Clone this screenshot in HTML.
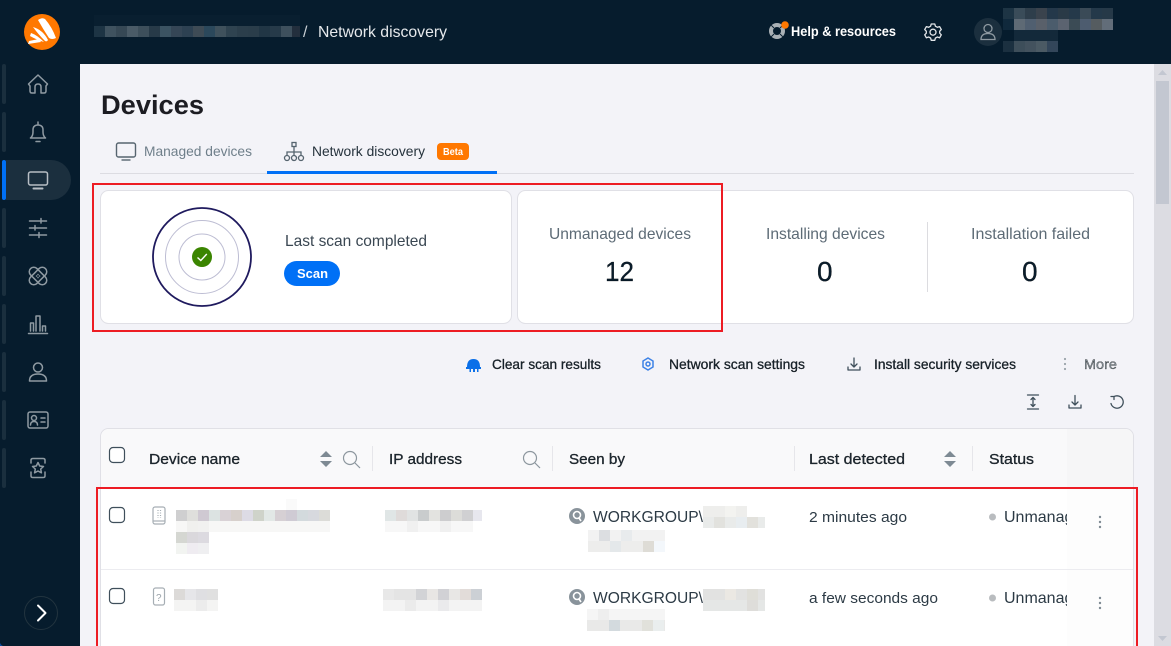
<!DOCTYPE html>
<html><head><meta charset="utf-8"><title>Network discovery</title>
<style>
html,body{margin:0;padding:0;width:1171px;height:646px;overflow:hidden;background:#f3f3f8}
svg{display:block}
text{font-family:"Liberation Sans",sans-serif}
.m{stroke:currentColor;stroke-width:.25px}
rect.p{width:11px;height:11px;shape-rendering:crispEdges}
.si{fill:none;stroke:#8f9aa2;stroke-width:1.500;stroke-linecap:round;stroke-linejoin:round}
.ai{fill:none;stroke:#3f4f5b;stroke-width:1.300;stroke-linecap:round;stroke-linejoin:round}
</style></head><body>
<svg width="1171" height="646" viewBox="0 0 1171 646" xmlns="http://www.w3.org/2000/svg">
<defs><clipPath id="c"><rect x="980" y="490" width="87" height="156"/></clipPath></defs>
<rect width="1171" height="646" fill="#f3f3f8"/>
<rect width="1171" height="64" fill="#061c2d"/>
<rect width="80" height="646" fill="#061c2d"/>
<path d="M0 643 Q1 645 3 646 H0Z" fill="#0a4a9a"/>

<!-- logo -->
<circle cx="42" cy="32" r="18" fill="#ff7800"/>
<path d="M38 20 Q42 17 45 19 Q52 27 56 38 Q52 40 49 38 Q43 29 38 20Z M33 27 Q43 30 48 40 Q47 42 45 41 Q38 34 33 27Z M31 33 Q37 35 44 42 Q37 40 30 36Z M29 41 L39 39 L41 42 L28 44Z" fill="#fff"/>

<!-- sidebar ticks -->
<g fill="#1a2f3e">
<rect x="2" y="64" width="4" height="40" rx="2"/><rect x="2" y="112" width="4" height="40" rx="2"/>
<rect x="2" y="208" width="4" height="40" rx="2"/><rect x="2" y="256" width="4" height="40" rx="2"/>
<rect x="2" y="304" width="4" height="40" rx="2"/><rect x="2" y="352" width="4" height="40" rx="2"/>
<rect x="2" y="400" width="4" height="40" rx="2"/><rect x="2" y="448" width="4" height="40" rx="2"/>
</g>
<path d="M6 160 H51 A20 20 0 0 1 51 200 H6Z" fill="#1b2f3e"/>
<rect x="2" y="160" width="4" height="40" rx="2" fill="#0070f6"/>

<!-- sidebar icons -->
<g class="si">
<path transform="translate(38,84)" d="M-9.500 0 L0 -9 L9.500 0 L8 2 V7 Q8 9 6 9 H3 V3 Q3 0 0 0 Q-3 0 -3 3 V9 H-6 Q-8 9 -8 7 V2Z"/>
<path transform="translate(38,132)" d="M-7.500 6 H7.500 Q5 4 5 0 V-2 Q5 -7 0 -7 Q-5 -7 -5 -2 V0 Q-5 4 -7.500 6Z M0 -7 V-10 M-2 9.500 H2"/>
<g transform="translate(38,180)" style="stroke:#b7bec4"><rect x="-9.500" y="-8" width="19" height="13" rx="2"/><path d="M-4.500 8.500 H4.500" stroke-width="2"/></g>
<path transform="translate(38,228)" d="M-8.500 -7 H8.500 M3 -9.500 V-5 M-8.500 0 H8.500 M-3 -2.500 V2 M-8.500 7 H8.500 M1 4.500 V9.500"/>
<g transform="translate(38,276)"><rect x="-10.500" y="-4.500" width="21" height="9" rx="4.500" transform="rotate(45)"/><rect x="-10.500" y="-4.500" width="21" height="9" rx="4.500" transform="rotate(-45)"/><path d="M0 -1.500 V-1.400 M0 1.500 V1.600 M-1.500 0 H-1.400 M1.500 0 H1.600"/></g>
<g transform="translate(38,324)"><path d="M-9.500 9.500 H9.500 M-7.500 7 V-1 H-4.500 V7 M-2 7 V-8 H2 V7 M4.500 7 V2 H7.500 V7"/></g>
<g transform="translate(38,372)"><circle cx="0" cy="-4.500" r="4.500"/><path d="M-8.500 9 Q-8.500 2 0 2 Q8.500 2 8.500 9Z"/></g>
<g transform="translate(38,420)"><rect x="-10" y="-8" width="20" height="16" rx="2"/><circle cx="-4" cy="-2" r="2.500"/><path d="M-7.500 5 Q-7.500 1.500 -4 1.500 Q-.5 1.500 -.5 5 M3 -2 H7 M3 2 H7"/></g>
<g transform="translate(38,468)"><path d="M-7 -5 V-8 Q-7 -9.500 -5 -9.500 H5 Q7 -9.500 7 -8 V-5 M-7 4 V8 Q-7 9.500 -5 9.500 H5 Q7 9.500 7 8 V4 M0 -5.500 L1.700 -2 L5.500 -1.500 L2.700 1 L3.400 4.800 L0 3 L-3.400 4.800 L-2.700 1 L-5.500 -1.500 L-1.700 -2Z"/></g>
</g>
<circle cx="41" cy="613" r="16.500" fill="none" stroke="#22343f" stroke-width="1"/>
<path d="M38 605.500 L45.500 613 L38 620.500" fill="none" stroke="#fff" stroke-width="2" stroke-linecap="round" stroke-linejoin="round"/>

<!-- header blur -->
<g>
<rect x="94" y="15" width="206" height="11" fill="#091f30"/>
<rect class="p" x="94" y="26" fill="#1d3444"/><rect class="p" x="105" y="26" fill="#3f525f"/><rect class="p" x="116" y="26" fill="#364855"/><rect class="p" x="127" y="26" fill="#4a5b67"/><rect class="p" x="138" y="26" fill="#3d4f5b"/><rect class="p" x="149" y="26" fill="#273a48"/><rect class="p" x="160" y="26" fill="#3b5362"/><rect class="p" x="171" y="26" fill="#354656"/><rect class="p" x="182" y="26" fill="#2d4152"/><rect class="p" x="193" y="26" fill="#3e4b55"/><rect class="p" x="204" y="26" fill="#2b485b"/><rect class="p" x="215" y="26" fill="#3f515c"/><rect class="p" x="226" y="26" fill="#2f4350"/><rect class="p" x="237" y="26" fill="#2b3e4b"/><rect class="p" x="248" y="26" fill="#2a3d4a"/><rect class="p" x="259" y="26" fill="#213645"/><rect class="p" x="270" y="26" fill="#263a49"/><rect class="p" x="281" y="26" fill="#3e505d"/><rect class="p" x="292" y="26" fill="#232f3d" style="width:8px"/>
</g>
<text x="303" y="37" font-size="16" fill="#c8cfd4">/</text>
<text x="318" y="37" font-size="16" fill="#e6e9ec" textLength="129" lengthAdjust="spacingAndGlyphs">Network discovery</text>

<!-- help -->
<circle cx="777" cy="31" r="6" fill="none" stroke="#aab1b6" stroke-width="4"/>
<path d="M771.300 25.300 L774 28 M782.700 25.300 L780 28 M771.300 36.700 L774 34 M782.700 36.700 L780 34" stroke="#061c2d" stroke-width="1"/>
<circle cx="785" cy="25" r="3.800" fill="#ff7800"/>
<text x="791" y="36" font-size="13.500" font-weight="700" fill="#fff" textLength="105" lengthAdjust="spacingAndGlyphs">Help &amp; resources</text>
<g transform="translate(933,32)" fill="none" stroke="#e3e6e9" stroke-width="1.300" stroke-linejoin="round">
<path d="M-1.800 -8 H1.800 L2.400 -5.800 L4.400 -4.700 L6.600 -5.400 L8.300 -2.400 L6.700 -.8 V1.200 L8.300 2.800 L6.600 5.800 L4.400 5 L2.400 6.100 L1.800 8.300 H-1.800 L-2.400 6.100 L-4.400 5 L-6.600 5.800 L-8.300 2.800 L-6.700 1.200 V-.8 L-8.300 -2.400 L-6.600 -5.400 L-4.400 -4.700 L-2.400 -5.800Z"/>
<circle cx="0" cy="0.200" r="3"/>
</g>
<circle cx="988" cy="32" r="14" fill="#1b2f3e"/>
<g transform="translate(988,32)" fill="none" stroke="#8f9aa2" stroke-width="1.300"><circle cx="0" cy="-3.500" r="4"/><path d="M-7 7.500 Q-7 1.500 0 1.500 Q7 1.500 7 7.500Z"/></g>
<g>
<rect class="p" x="1003" y="8" fill="#1d3444"/><rect class="p" x="1014" y="8" fill="#3a4c59"/><rect class="p" x="1025" y="8" fill="#2e3e4b"/><rect class="p" x="1036" y="8" fill="#3a434d"/><rect class="p" x="1047" y="8" fill="#24384a"/><rect class="p" x="1058" y="8" fill="#2a3a47"/><rect class="p" x="1069" y="8" fill="#25394a"/><rect class="p" x="1080" y="8" fill="#3a4a57"/><rect class="p" x="1091" y="8" fill="#24394a"/><rect class="p" x="1102" y="8" fill="#263948"/>
<rect class="p" x="1003" y="19" fill="#10293c"/><rect class="p" x="1014" y="19" fill="#5e6a75"/><rect class="p" x="1025" y="19" fill="#505f70"/><rect class="p" x="1036" y="19" fill="#59606a"/><rect class="p" x="1047" y="19" fill="#4b5c6c"/><rect class="p" x="1058" y="19" fill="#5b6370"/><rect class="p" x="1069" y="19" fill="#3b4b55"/><rect class="p" x="1080" y="19" fill="#4d5c6f"/><rect class="p" x="1091" y="19" fill="#555c60"/><rect class="p" x="1102" y="19" fill="#626d79"/>
<rect x="1014" y="30" width="44" height="11" fill="#13293a"/>
<rect class="p" x="1003" y="41" fill="#1b3040"/><rect class="p" x="1014" y="41" fill="#3d4e5a"/><rect class="p" x="1025" y="41" fill="#43525e"/><rect class="p" x="1036" y="41" fill="#4b5a64"/><rect class="p" x="1047" y="41" fill="#33465a"/>
</g>

<!-- scrollbar -->
<rect x="1154" y="64" width="17" height="582" fill="#dcdce2"/>
<rect x="1156" y="81" width="13" height="123" fill="#c3c7d1"/>
<path d="M1158 75 L1162.500 70 L1167 75Z" fill="#c3c7d1"/>
<path d="M1158 636 L1162.500 641 L1167 636Z" fill="#c3c7d1"/>

<!-- title -->
<text x="101" y="114" font-size="27" font-weight="700" fill="#1c1c22" textLength="103" lengthAdjust="spacingAndGlyphs">Devices</text>

<!-- tabs -->
<rect x="100" y="173" width="1034" height="1" fill="#dcdce2"/>
<rect x="267" y="171" width="230" height="3" fill="#0070f6"/>
<g transform="translate(126,151)" fill="none" stroke="#56646f" stroke-width="1.400"><rect x="-9.500" y="-8" width="19" height="14" rx="2"/><path d="M-4.500 9 H4.500"/></g>
<text x="144" y="156" font-size="14" fill="#6f7f8a" textLength="108" lengthAdjust="spacingAndGlyphs">Managed devices</text>
<g transform="translate(294,152)" fill="none" stroke="#56646f" stroke-width="1.300"><rect x="-2" y="-9.500" width="4" height="4"/><path d="M0 -5.500 V0 M-7 3 V0 H7 V3 M0 0 V3"/><circle cx="-7" cy="6" r="2.500"/><circle cx="0" cy="6" r="2.500"/><circle cx="7" cy="6" r="2.500"/></g>
<text x="312" y="156" font-size="14" fill="#25323c" textLength="113" lengthAdjust="spacingAndGlyphs">Network discovery</text>
<rect x="437" y="143" width="32" height="17" rx="4" fill="#ff7800"/>
<text x="443" y="155" font-size="10" font-weight="700" fill="#fff" textLength="20" lengthAdjust="spacingAndGlyphs">Beta</text>

<!-- cards -->
<rect x="100.500" y="190.500" width="411" height="133" rx="8" fill="#fff" stroke="#e0e0e6"/>
<rect x="517.500" y="190.500" width="616" height="133" rx="8" fill="#fff" stroke="#e0e0e6"/>
<g fill="none">
<circle cx="202" cy="257" r="49" stroke="#1f1a5e" stroke-width="1.800"/>
<circle cx="202" cy="257" r="36.500" stroke="#bdbdd3"/>
<circle cx="202" cy="257" r="23" stroke="#bdbdd3"/>
</g>
<circle cx="202" cy="257" r="10" fill="#3b8500"/>
<path d="M197.500 257.500 L200.800 260.500 L206.800 254" fill="none" stroke="#fff" stroke-width="1.400"/>
<text x="285" y="246" font-size="16" fill="#3a4752" textLength="142" lengthAdjust="spacingAndGlyphs">Last scan completed</text>
<rect x="284" y="261" width="56" height="25" rx="12.500" fill="#0070f6"/>
<text x="297" y="278" font-size="13" font-weight="700" fill="#fff" textLength="31" lengthAdjust="spacingAndGlyphs">Scan</text>
<text x="549" y="239" font-size="16" fill="#5d6b76" textLength="142" lengthAdjust="spacingAndGlyphs">Unmanaged devices</text>
<text x="605" y="281" font-size="28" fill="#0a1d2c" class="m" textLength="29" lengthAdjust="spacingAndGlyphs">12</text>
<text x="766" y="239" font-size="16" fill="#5d6b76" textLength="119" lengthAdjust="spacingAndGlyphs">Installing devices</text>
<text x="817" y="281" font-size="28" fill="#0a1d2c" class="m">0</text>
<rect x="927" y="222" width="1" height="70" fill="#dcdce0"/>
<text x="971" y="239" font-size="16" fill="#5d6b76" textLength="119" lengthAdjust="spacingAndGlyphs">Installation failed</text>
<text x="1022" y="281" font-size="28" fill="#0a1d2c" class="m">0</text>

<!-- red boxes -->
<rect x="93" y="184" width="629" height="147" fill="none" stroke="#ed1c24" stroke-width="2"/>

<!-- actions -->
<path d="M467 367 Q467 359 473.500 359 Q480 359 480 367 H481 V369 H478.500 V372 H477 V369 H475 V372 H473 V369 H471 V372 H469.500 V369 H466 V367Z" fill="#0a6fe8"/>
<text x="492" y="369" font-size="14" fill="#182631" class="m" textLength="109" lengthAdjust="spacingAndGlyphs">Clear scan results</text>
<g transform="translate(648,364)" fill="none" stroke="#3d82e6" stroke-width="1.500"><path d="M0 -6 L5 -3 V3 L0 6 L-5 3 V-3Z"/><circle r="2"/></g>
<text x="669" y="369" font-size="14" fill="#182631" class="m" textLength="136" lengthAdjust="spacingAndGlyphs">Network scan settings</text>
<g class="ai" transform="translate(854,364)"><path d="M0 -6 V2.500 M-3 0 L0 3 L3 0 M-6 3 V6 H6 V3"/></g>
<text x="874" y="369" font-size="14" fill="#182631" class="m" textLength="142" lengthAdjust="spacingAndGlyphs">Install security services</text>
<g fill="#9aa3aa"><circle cx="1065" cy="359" r="1.100"/><circle cx="1065" cy="364" r="1.100"/><circle cx="1065" cy="369" r="1.100"/></g>
<text x="1084" y="369" font-size="14" fill="#8b969e" class="m" textLength="33" lengthAdjust="spacingAndGlyphs">More</text>

<g class="ai" transform="translate(1033,402)"><path d="M-5.500 -7 H5.500 M-5.500 7 H5.500 M0 -4 V4 M-2 -2.500 L0 -4.500 L2 -2.500 M-2 2.500 L0 4.500 L2 2.500"/></g>
<g class="ai" transform="translate(1075,402)"><path d="M0 -6.500 V2.500 M-3 0 L0 3 L3 0 M-6 3 V6 H6 V3"/></g>
<g class="ai" transform="translate(1117,402)"><path d="M-3 -5.400 A6.200 6.200 0 1 1 -6 1.500 M-6 -5.500 H-3 V-2.500"/></g>

<!-- table -->
<path d="M108.500 428.500 H1125.500 A8 8 0 0 1 1133.500 436.500 V660 H100.500 V436.500 A8 8 0 0 1 108.500 428.500Z" fill="#fff" stroke="#e0e0e6"/>
<path d="M109 429 H1125 A8 8 0 0 1 1133 437 V487 H101 V437 A8 8 0 0 1 109 429Z" fill="#f9f9fa"/>
<!-- sticky col -->
<path d="M1067 429 H1125 A8 8 0 0 1 1133 437 V487 H1067Z" fill="#f6f6f7"/>
<rect x="1067" y="488" width="66" height="158" fill="#fdfdfd"/>
<rect x="101" y="569" width="1032" height="1" fill="#ececf0"/>
<g fill="#e6e6ea"><rect x="372" y="446" width="1" height="25"/><rect x="552" y="446" width="1" height="25"/><rect x="794" y="446" width="1" height="25"/><rect x="972" y="446" width="1" height="25"/></g>

<rect x="109.500" y="447.500" width="15" height="15" rx="3.500" fill="#fff" stroke="#3f4f5b" stroke-width="1.200"/>
<rect x="109.500" y="507.500" width="15" height="15" rx="3.500" fill="#fff" stroke="#3f4f5b" stroke-width="1.200"/>
<rect x="109.500" y="588.500" width="15" height="15" rx="3.500" fill="#fff" stroke="#3f4f5b" stroke-width="1.200"/>

<text x="149" y="464" font-size="15" fill="#1e2b35" class="m" textLength="91" lengthAdjust="spacingAndGlyphs">Device name</text>
<path d="M320 457 L326 451 L332 457Z M320 461 L326 467 L332 461Z" fill="#7e8a93"/>
<g fill="none" stroke="#8d979e" stroke-width="1.200"><circle cx="350" cy="458" r="6.500"/><path d="M355 463 L360 468"/><circle cx="530" cy="458" r="6.500"/><path d="M535 463 L540 468"/></g>
<text x="389" y="464" font-size="15" fill="#1e2b35" class="m" textLength="73" lengthAdjust="spacingAndGlyphs">IP address</text>
<text x="569" y="464" font-size="15" fill="#1e2b35" class="m" textLength="56" lengthAdjust="spacingAndGlyphs">Seen by</text>
<text x="809" y="464" font-size="15" fill="#1e2b35" class="m" textLength="96" lengthAdjust="spacingAndGlyphs">Last detected</text>
<path d="M944 457 L950 451 L956 457Z M944 461 L950 467 L956 461Z" fill="#7e8a93"/>
<text x="989" y="464" font-size="15" fill="#1e2b35" class="m" textLength="45" lengthAdjust="spacingAndGlyphs">Status</text>

<!-- row icons -->
<g fill="none" stroke="#a6aeb4" stroke-width="1.200">
<rect x="153" y="507" width="12" height="17" rx="2"/><path d="M153 521 H165"/><path d="M158 510 V518 M160.500 510 V518" stroke-dasharray="1 1.500"/>
<rect x="153.500" y="588" width="11" height="17" rx="2"/>
</g>
<text x="156" y="601" font-size="10" fill="#9aa3aa">?</text>

<!-- blurred name -->
<g>
<rect class="p" x="176" y="510" fill="#cfcfd0"/><rect class="p" x="187" y="510" fill="#dfdfdc"/><rect class="p" x="198" y="510" fill="#cfc9d2"/><rect class="p" x="209" y="510" fill="#dce3e2"/><rect class="p" x="220" y="510" fill="#d9d2d6"/><rect class="p" x="231" y="510" fill="#d7d0cc"/><rect class="p" x="242" y="510" fill="#dddbe5"/><rect class="p" x="253" y="510" fill="#cfd3ca"/><rect class="p" x="264" y="510" fill="#e2e8e6"/><rect class="p" x="275" y="510" fill="#d6d0d4"/><rect class="p" x="286" y="510" fill="#cfcbd4"/><rect class="p" x="297" y="510" fill="#d3dadd"/><rect class="p" x="308" y="510" fill="#d7d9de"/><rect class="p" x="319" y="510" fill="#dcdcd8"/>
<rect x="286" y="499" width="11" height="11" fill="#fafafa"/>
<rect x="176" y="521" width="154" height="11" fill="#f7f7f6"/><rect class="p" x="187" y="521" fill="#f0f0ee"/><rect class="p" x="198" y="521" fill="#f1f1f0"/>
<rect class="p" x="176" y="532" fill="#d5d7d2"/><rect class="p" x="187" y="532" fill="#dad8dc"/><rect class="p" x="198" y="532" fill="#dcdae0"/>
<rect class="p" x="176" y="543" fill="#f2f4f1"/><rect class="p" x="187" y="543" fill="#efecf1"/><rect class="p" x="198" y="543" fill="#efeff1"/>
<rect class="p" x="385" y="510" fill="#e0e6e6"/><rect class="p" x="396" y="510" fill="#dfdbda"/><rect class="p" x="407" y="510" fill="#e1e3e3"/><rect class="p" x="418" y="510" fill="#c9cccd"/><rect class="p" x="429" y="510" fill="#e3e3e0"/><rect class="p" x="440" y="510" fill="#cdcdcf"/><rect class="p" x="451" y="510" fill="#dcdcd9"/><rect class="p" x="462" y="510" fill="#d0d0d2"/><rect class="p" x="473" y="510" fill="#e7e7ee" style="width:9px"/>
<rect x="385" y="521" width="88" height="11" fill="#f7f7f7"/><rect class="p" x="407" y="521" fill="#f0f0f0"/><rect class="p" x="440" y="521" fill="#f0f0f0"/>
<rect class="p" x="174" y="589" fill="#dcdad8"/><rect class="p" x="185" y="589" fill="#e6e6e9"/><rect class="p" x="196" y="589" fill="#dfdfe2"/><rect class="p" x="207" y="589" fill="#e0e0e0"/>
<rect x="174" y="600" width="44" height="11" fill="#f4f4f3"/><rect class="p" x="196" y="600" fill="#ececec"/>
<rect class="p" x="383" y="589" fill="#e8e8e8"/><rect class="p" x="394" y="589" fill="#e4e4e4"/><rect class="p" x="405" y="589" fill="#e4e4e4"/><rect class="p" x="416" y="589" fill="#d2d3d6"/><rect class="p" x="427" y="589" fill="#e8e6e4"/><rect class="p" x="438" y="589" fill="#d1d1d5"/><rect class="p" x="449" y="589" fill="#e8e7e5"/><rect class="p" x="460" y="589" fill="#e2dcd9"/><rect class="p" x="471" y="589" fill="#ccd0d5"/>
<rect x="383" y="600" width="99" height="11" fill="#f3f3f3"/><rect class="p" x="405" y="600" fill="#ebebeb"/><rect class="p" x="438" y="600" fill="#eaeaec"/>

<rect x="703" y="506" width="44" height="11" fill="#eeeeec"/><rect class="p" x="725" y="506" fill="#f3f3f0"/>
<rect x="703" y="517" width="62" height="11" fill="#e9ebea"/><rect class="p" x="714" y="517" fill="#e2e2de"/><rect class="p" x="736" y="517" fill="#e8edf0"/><rect class="p" x="747" y="517" fill="#e2e1dc"/>
<rect x="588" y="530" width="77" height="11" fill="#f2f2f2"/><rect class="p" x="599" y="530" fill="#dcdee1"/><rect class="p" x="621" y="530" fill="#e8ebed"/>
<rect x="588" y="541" width="77" height="11" fill="#ededec"/><rect class="p" x="610" y="541" fill="#e4e8ea"/><rect class="p" x="643" y="541" fill="#dedcd6"/><rect class="p" x="654" y="541" fill="#f3f7fb"/>
<rect x="703" y="589" width="62" height="11" fill="#e2e2e1"/><rect class="p" x="725" y="589" fill="#ebe8e3"/><rect class="p" x="747" y="589" fill="#dfded8"/>
<rect x="703" y="600" width="62" height="11" fill="#e5e7e6"/><rect class="p" x="747" y="600" fill="#dedddA"/>
<rect x="587" y="609" width="78" height="11" fill="#f5f5f5"/><rect class="p" x="598" y="609" fill="#eeeeee"/>
<rect x="587" y="620" width="78" height="11" fill="#e9e9e8"/><rect class="p" x="609" y="620" fill="#d3dade"/><rect class="p" x="642" y="620" fill="#e1e1db"/><rect class="p" x="653" y="620" fill="#eaeeee"/>
</g>

<!-- seen by -->
<g>
<circle cx="577" cy="516" r="8" fill="#89939b"/><circle cx="577" cy="515" r="3.500" fill="none" stroke="#fff" stroke-width="1.600"/><path d="M579 518 L581 521" stroke="#fff" stroke-width="1.600"/>
<circle cx="577" cy="597" r="8" fill="#89939b"/><circle cx="577" cy="596" r="3.500" fill="none" stroke="#fff" stroke-width="1.600"/><path d="M579 599 L581 602" stroke="#fff" stroke-width="1.600"/>
</g>
<text x="593" y="522" font-size="16" fill="#2c3a45" textLength="110" lengthAdjust="spacingAndGlyphs">WORKGROUP\</text>
<text x="593" y="603" font-size="16" fill="#2c3a45" textLength="110" lengthAdjust="spacingAndGlyphs">WORKGROUP\</text>
<text x="809" y="522" font-size="15" fill="#2c3a45" textLength="98" lengthAdjust="spacingAndGlyphs">2 minutes ago</text>
<text x="809" y="603" font-size="15" fill="#2c3a45" textLength="129" lengthAdjust="spacingAndGlyphs">a few seconds ago</text>
<circle cx="992.500" cy="517" r="3.500" fill="#b9bcbf"/>
<circle cx="992.500" cy="598" r="3.500" fill="#b9bcbf"/>
<g clip-path="url(#c)">
<text x="1004" y="522" font-size="16" fill="#2c3a45">Unmanaged</text>
<text x="1004" y="603" font-size="16" fill="#2c3a45">Unmanaged</text>
</g>

<g fill="#7e8a93">
<circle cx="1100" cy="517" r="1.200"/><circle cx="1100" cy="522" r="1.200"/><circle cx="1100" cy="527" r="1.200"/>
<circle cx="1100" cy="598" r="1.200"/><circle cx="1100" cy="603" r="1.200"/><circle cx="1100" cy="608" r="1.200"/>
</g>

<!-- red box 2 -->
<path d="M97 660 V488 H1137 V660" fill="none" stroke="#ed1c24" stroke-width="2"/>
</svg>
</body></html>
